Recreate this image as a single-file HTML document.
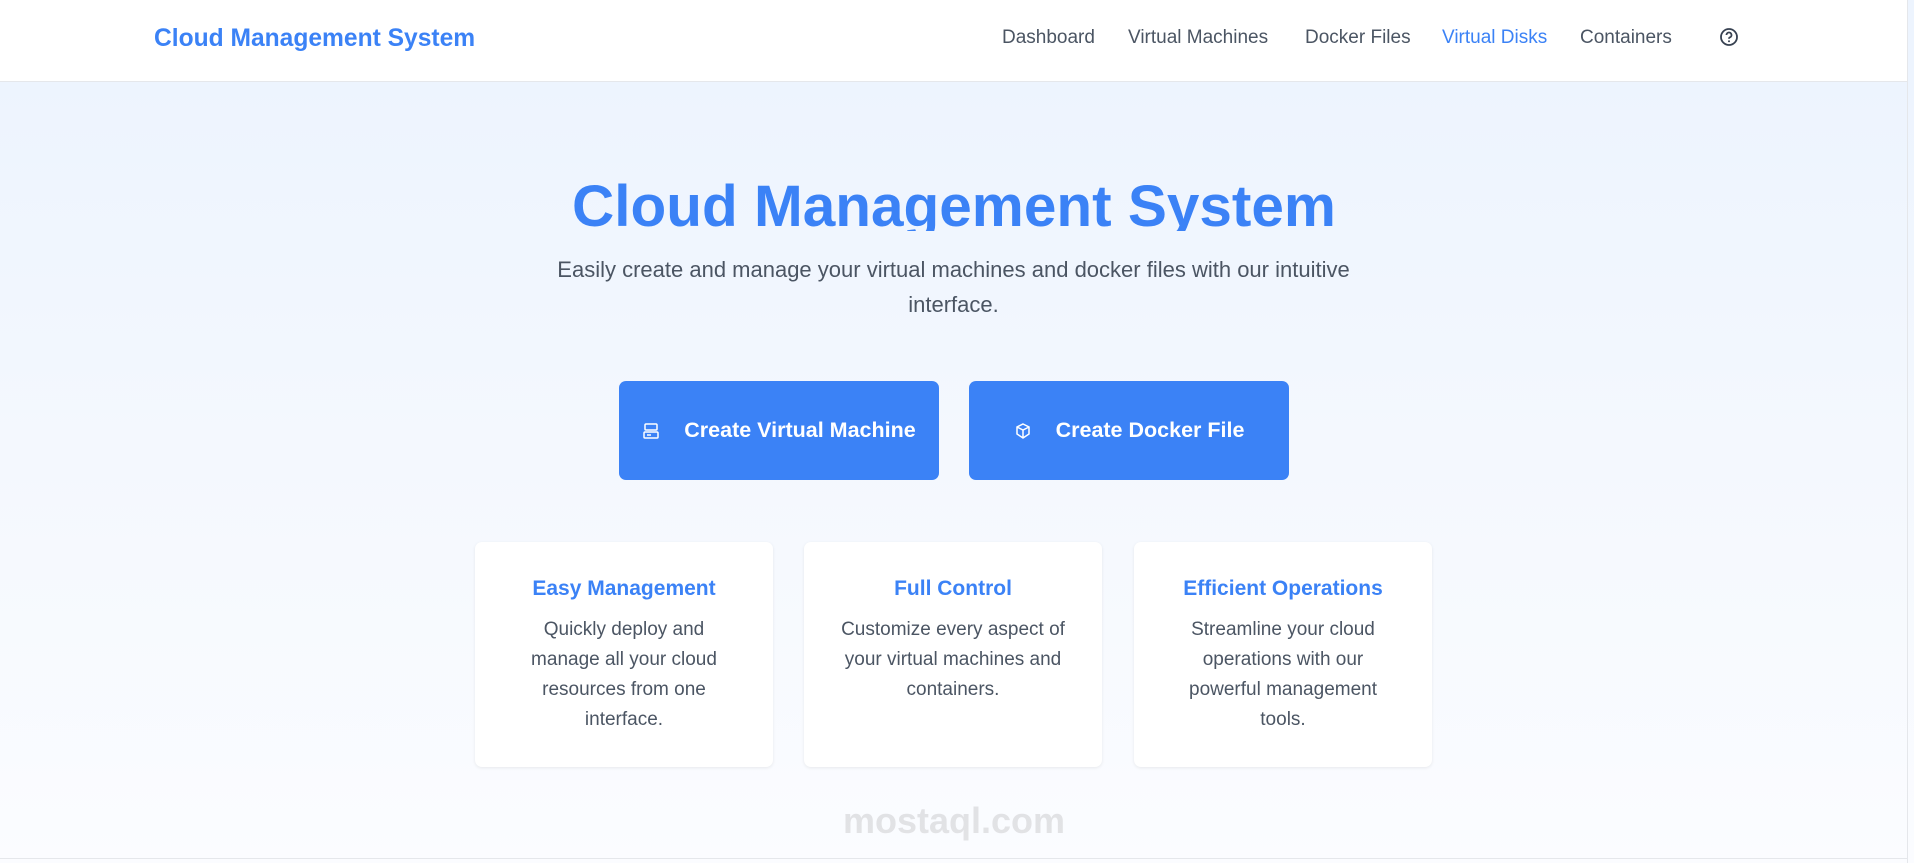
<!DOCTYPE html>
<html><head><meta charset="utf-8"><style>
*{margin:0;padding:0;box-sizing:border-box}
html,body{width:1914px;height:863px;overflow:hidden;font-family:"Liberation Sans",sans-serif}
body{background:linear-gradient(#edf4fe 82px,#f4f8fe 450px,#fbfcff 863px);position:relative}
.nav{position:absolute;left:0;top:0;width:1908px;height:82px;background:#fff;border-bottom:1px solid #e5e7eb}
.logo{position:absolute;left:154px;top:25px;font-size:24.6px;font-weight:bold;color:#3b82f6}
.ni{position:absolute;top:27px;font-size:19px;color:#4b5563}
.rb{position:absolute;left:1907px;top:0;width:1px;height:863px;background:#e5e7eb}
.bb{position:absolute;left:0;top:858px;width:1908px;height:1px;background:#e5e7eb}
h1{position:absolute;left:0;width:1908px;top:172px;text-align:center;font-size:58.5px;font-weight:bold;color:#3b82f6;height:59px;overflow:hidden;line-height:70px}
.sub{position:absolute;left:520px;width:867px;top:252px;text-align:center;font-size:22px;line-height:35px;color:#4b5563}
.btn{position:absolute;top:381px;width:320px;height:99px;background:#3b82f6;border-radius:7px;color:#fff;font-size:21.5px;font-weight:bold;display:flex;align-items:center;justify-content:center}
.btn svg{margin-right:24px}
.card{position:absolute;top:542px;width:298px;height:225px;background:#fff;border-radius:7px;box-shadow:0 1px 3px rgba(0,0,0,.08);text-align:center}
.card h3{margin-top:35px;font-size:21px;font-weight:bold;color:#3b82f6}
.card p{margin:14px auto 0;width:230px;font-size:19px;line-height:30px;color:#4b5563}
.wm{position:absolute;left:843px;top:800px;font-size:36px;font-weight:bold;color:rgba(150,150,150,.25)}
</style></head><body>
<div class="nav">
<div class="logo">Cloud Management System</div>
<div class="ni" style="left:1002px">Dashboard</div>
<div class="ni" style="left:1128px">Virtual Machines</div>
<div class="ni" style="left:1305px">Docker Files</div>
<div class="ni" style="left:1442px;color:#3b82f6">Virtual Disks</div>
<div class="ni" style="left:1580px">Containers</div>
<svg style="position:absolute;left:1719px;top:27px" width="20" height="20" viewBox="0 0 20 20"><circle cx="10" cy="10" r="8" fill="none" stroke="#374151" stroke-width="1.8"/><path d="M7.5 8a2.5 2.5 0 1 1 3.5 2.3c-.7.3-1 .8-1 1.5" fill="none" stroke="#374151" stroke-width="1.8"/><circle cx="10" cy="14.3" r="1" fill="#374151"/></svg>
</div>
<div class="rb"></div><div class="bb"></div>
<h1>Cloud Management System</h1>
<div class="sub">Easily create and manage your virtual machines and docker files with our intuitive interface.</div>
<div class="btn" style="left:619px"><svg width="18" height="18" viewBox="0 0 18 18" fill="none" stroke="#fff" stroke-width="1.5"><rect x="3" y="2" width="12" height="6" rx="1"/><rect x="2" y="10" width="14" height="6" rx="1"/><path d="M5 13h4"/></svg>Create Virtual Machine</div>
<div class="btn" style="left:969px"><svg width="18" height="18" viewBox="0 0 18 18" fill="none" stroke="#fff" stroke-width="1.5"><path d="M9 2l6 3v7l-6 4-6-4V5z M3 5l6 3 6-3 M9 8v8"/></svg>Create Docker File</div>
<div class="card" style="left:475px"><h3>Easy Management</h3><p>Quickly deploy and manage all your cloud resources from one interface.</p></div>
<div class="card" style="left:804px"><h3>Full Control</h3><p>Customize every aspect of your virtual machines and containers.</p></div>
<div class="card" style="left:1134px"><h3>Efficient Operations</h3><p>Streamline your cloud operations with our powerful management tools.</p></div>
<div class="wm">mostaql.com</div>
</body></html>
